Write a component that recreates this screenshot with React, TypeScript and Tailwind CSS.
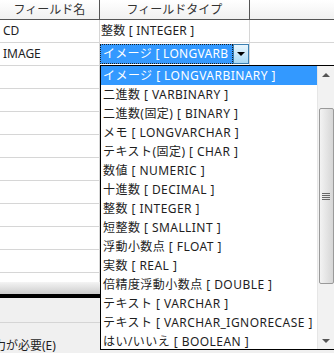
import React from "react";

const types = [
  "イメージ [ LONGVARBINARY ]",
  "二進数 [ VARBINARY ]",
  "二進数(固定) [ BINARY ]",
  "メモ [ LONGVARCHAR ]",
  "テキスト(固定) [ CHAR ]",
  "数値 [ NUMERIC ]",
  "十進数 [ DECIMAL ]",
  "整数 [ INTEGER ]",
  "短整数 [ SMALLINT ]",
  "浮動小数点 [ FLOAT ]",
  "実数 [ REAL ]",
  "倍精度浮動小数点 [ DOUBLE ]",
  "テキスト [ VARCHAR ]",
  "テキスト [ VARCHAR_IGNORECASE ]",
  "はい/いいえ [ BOOLEAN ]",
];

const rows = [
  { name: "CD", type: "整数 [ INTEGER ]" },
  { name: "IMAGE", type: "", editing: true },
  ...Array.from({ length: 10 }, () => ({ name: "", type: "" })),
];

function Row({ name, type, editing }: { name: string; type: string; editing?: boolean }) {
  return (
    <div className="flex h-[23px] shrink-0 border-b border-[#d6d6d6]">
      <div className="flex w-[100px] items-center border-r border-[#d6d6d6] pl-[3px]">{name}</div>
      <div className="flex w-[150px] items-center border-r border-[#d6d6d6]">
        {editing ? (
          <div className="flex h-full w-full items-stretch py-px">
            <div className="flex flex-1 items-center overflow-hidden whitespace-nowrap border border-dotted border-[#1e1e1e] bg-[#3399ff] pl-[2px] tracking-[0.3px] text-white">
              イメージ [ LONGVARB
            </div>
            <div className="flex w-[16px] items-center justify-center border border-[#3c7fb1] bg-gradient-to-b from-[#eaf6fd] to-[#a7d9f5]">
              <div className="h-0 w-0 border-x-[4px] border-t-[4px] border-x-transparent border-t-black" />
            </div>
          </div>
        ) : (
          <span className="pl-[1px] tracking-[0.2px]">{type}</span>
        )}
      </div>
      <div className="flex-1" />
    </div>
  );
}

export default function App() {
  return (
    <div className="relative flex h-[353px] w-[334px] flex-col overflow-hidden bg-white font-['Noto_Sans','Noto_Sans_CJK_JP',sans-serif] text-[12px] leading-none text-[#1e1e1e]">
      {/* Grid */}
      <div className="flex h-[282px] shrink-0 flex-col overflow-hidden">
        <div className="flex h-[20px] shrink-0 border-b border-[#555] bg-gradient-to-b from-white to-[#f1f1f1] text-[#333]">
          <div className="flex w-[100px] items-center justify-center border-r border-[#555]">フィールド名</div>
          <div className="flex w-[150px] items-center justify-center border-r border-[#555]">フィールドタイプ</div>
          <div className="flex-1" />
        </div>
        {rows.map((r, i) => (
          <Row key={i} {...r} />
        ))}
      </div>
      <div className="h-[12px] shrink-0 bg-gradient-to-b from-[#f4f4f4] to-[#cdcdcd]" />
      <div className="h-[4px] shrink-0 bg-black" />
      <div className="flex flex-1 flex-col bg-[#f0f0f0]">
        <div className="h-[25px] border-b border-[#d5d5d5]" />
        <div className="ml-[-18px] mt-[17px] whitespace-nowrap">入力が必要(E)</div>
      </div>

      {/* Dropdown list */}
      <div className="absolute left-[100px] top-[65px] flex h-[285px] w-[240px] border border-black bg-white">
        <div className="flex w-[216px] flex-col overflow-hidden">
          {types.map((t, i) => (
            <div
              key={t}
              className={
                "flex h-[19px] shrink-0 items-center whitespace-nowrap pl-[2px] tracking-[0.45px] " +
                (i === 0 ? "bg-[#3399ff] text-white" : "")
              }
            >
              {t}
            </div>
          ))}
        </div>
        <div className="flex w-[17px] flex-col items-center border-l border-[#e6e6e6] bg-[#f2f2f2]">
          <div className="flex h-[17px] w-full items-center justify-center">
            <div className="h-0 w-0 border-x-[4px] border-b-[4px] border-x-transparent border-b-[#555]" />
          </div>
          <div className="mt-[25px] flex h-[176px] w-[15px] items-center justify-center rounded-[2px] border border-[#9a9a9a] bg-gradient-to-r from-[#f3f3f3] to-[#d6d6d6]">
            <div className="flex flex-col gap-[1px]">
              <div className="h-px w-[8px] bg-[#666]" />
              <div className="h-px w-[8px] bg-[#666]" />
              <div className="h-px w-[8px] bg-[#666]" />
              <div className="h-px w-[8px] bg-[#666]" />
            </div>
          </div>
          <div className="flex flex-1 items-end justify-center pb-[6px]">
            <div className="h-0 w-0 border-x-[4px] border-t-[4px] border-x-transparent border-t-[#555]" />
          </div>
        </div>
      </div>
    </div>
  );
}
